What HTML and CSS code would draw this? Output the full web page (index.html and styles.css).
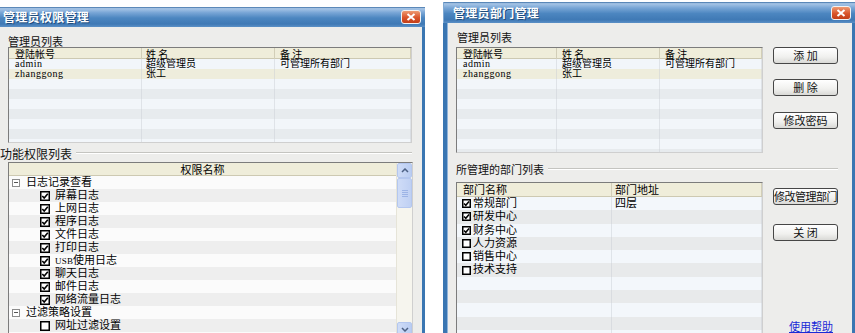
FILE: index.html
```html
<!DOCTYPE html>
<html lang="zh">
<head>
<meta charset="utf-8">
<title>管理员管理</title>
<link rel="stylesheet" href="styles.css">
</head>
<body>
<div class="win win-l">
  <div class="titlebar">
    <span class="title">管理员权限管理</span>
    <span class="close"><svg width="10" height="8" viewBox="0 0 10 8"><path d="M1.5 1 L8.5 7 M8.5 1 L1.5 7" stroke="#fff" stroke-width="2" fill="none"/></svg></span>
  </div>
  <div class="frame">
    <div class="pane pane-l">
      <div class="lbl">管理员列表</div>
      <div class="listbox lb-l">
        <div class="lh cols-l"><span class="c1">登陆帐号</span><span class="c2">姓 名</span><span class="c3">备 注</span></div>
        <div class="lr cols-l r-a"><span class="c1">admin</span><span class="c2">超级管理员</span><span class="c3">可管理所有部门</span></div>
        <div class="lr cols-l r-sel"><span class="c1">zhanggong</span><span class="c2">张工</span><span class="c3"></span></div>
        <div class="lr cols-l r-a"><span class="c1"></span><span class="c2"></span><span class="c3"></span></div>
        <div class="lr cols-l r-b"><span class="c1"></span><span class="c2"></span><span class="c3"></span></div>
        <div class="lr cols-l r-a"><span class="c1"></span><span class="c2"></span><span class="c3"></span></div>
        <div class="lr cols-l r-b"><span class="c1"></span><span class="c2"></span><span class="c3"></span></div>
        <div class="lr cols-l r-a"><span class="c1"></span><span class="c2"></span><span class="c3"></span></div>
        <div class="lr cols-l r-b"><span class="c1"></span><span class="c2"></span><span class="c3"></span></div>
        <div class="lr cols-l r-a"><span class="c1"></span><span class="c2"></span><span class="c3"></span></div>
      </div>
      <div class="sect sect-l"><span>功能权限列表</span><i class="etch"></i></div>
      <div class="tree">
        <div class="tree-main">
          <div class="th">权限名称</div>
          <div class="tr t-a grp"><span class="mbox"></span><span>日志记录查看</span></div>
          <div class="tr t-b leaf"><svg class="ck" width="10" height="10" viewBox="0 0 10 10"><rect x="0.75" y="0.75" width="8.5" height="8.5" fill="#fff" stroke="#000" stroke-width="1.5"/><path d="M2.3 5 L4.2 7 L7.8 2.8" stroke="#000" stroke-width="1.6" fill="none"/></svg><span>屏幕日志</span></div>
          <div class="tr t-a leaf"><svg class="ck" width="10" height="10" viewBox="0 0 10 10"><rect x="0.75" y="0.75" width="8.5" height="8.5" fill="#fff" stroke="#000" stroke-width="1.5"/><path d="M2.3 5 L4.2 7 L7.8 2.8" stroke="#000" stroke-width="1.6" fill="none"/></svg><span>上网日志</span></div>
          <div class="tr t-b leaf"><svg class="ck" width="10" height="10" viewBox="0 0 10 10"><rect x="0.75" y="0.75" width="8.5" height="8.5" fill="#fff" stroke="#000" stroke-width="1.5"/><path d="M2.3 5 L4.2 7 L7.8 2.8" stroke="#000" stroke-width="1.6" fill="none"/></svg><span>程序日志</span></div>
          <div class="tr t-a leaf"><svg class="ck" width="10" height="10" viewBox="0 0 10 10"><rect x="0.75" y="0.75" width="8.5" height="8.5" fill="#fff" stroke="#000" stroke-width="1.5"/><path d="M2.3 5 L4.2 7 L7.8 2.8" stroke="#000" stroke-width="1.6" fill="none"/></svg><span>文件日志</span></div>
          <div class="tr t-b leaf"><svg class="ck" width="10" height="10" viewBox="0 0 10 10"><rect x="0.75" y="0.75" width="8.5" height="8.5" fill="#fff" stroke="#000" stroke-width="1.5"/><path d="M2.3 5 L4.2 7 L7.8 2.8" stroke="#000" stroke-width="1.6" fill="none"/></svg><span>打印日志</span></div>
          <div class="tr t-a leaf"><svg class="ck" width="10" height="10" viewBox="0 0 10 10"><rect x="0.75" y="0.75" width="8.5" height="8.5" fill="#fff" stroke="#000" stroke-width="1.5"/><path d="M2.3 5 L4.2 7 L7.8 2.8" stroke="#000" stroke-width="1.6" fill="none"/></svg><span><span class="lat">USB</span>使用日志</span></div>
          <div class="tr t-b leaf"><svg class="ck" width="10" height="10" viewBox="0 0 10 10"><rect x="0.75" y="0.75" width="8.5" height="8.5" fill="#fff" stroke="#000" stroke-width="1.5"/><path d="M2.3 5 L4.2 7 L7.8 2.8" stroke="#000" stroke-width="1.6" fill="none"/></svg><span>聊天日志</span></div>
          <div class="tr t-a leaf"><svg class="ck" width="10" height="10" viewBox="0 0 10 10"><rect x="0.75" y="0.75" width="8.5" height="8.5" fill="#fff" stroke="#000" stroke-width="1.5"/><path d="M2.3 5 L4.2 7 L7.8 2.8" stroke="#000" stroke-width="1.6" fill="none"/></svg><span>邮件日志</span></div>
          <div class="tr t-b leaf"><svg class="ck" width="10" height="10" viewBox="0 0 10 10"><rect x="0.75" y="0.75" width="8.5" height="8.5" fill="#fff" stroke="#000" stroke-width="1.5"/><path d="M2.3 5 L4.2 7 L7.8 2.8" stroke="#000" stroke-width="1.6" fill="none"/></svg><span>网络流量日志</span></div>
          <div class="tr t-a grp"><span class="mbox"></span><span>过滤策略设置</span></div>
          <div class="tr t-b leaf"><svg class="ck" width="10" height="10" viewBox="0 0 10 10"><rect x="0.75" y="0.75" width="8.5" height="8.5" fill="#fff" stroke="#000" stroke-width="1.5"/></svg><span>网址过滤设置</span></div>
          <div class="tr t-a leaf"></div>
        </div>
        <div class="sb">
          <div class="sb-btn"><svg width="8" height="5" viewBox="0 0 8 5"><path d="M1 4 L4 1 L7 4" stroke="#4D6185" stroke-width="1.5" fill="none"/></svg></div>
          <div class="sb-thumb"><i></i><i></i><i></i><i></i></div>
          <div class="sb-track"></div>
          <div class="sb-btn"><svg width="8" height="5" viewBox="0 0 8 5"><path d="M1 1 L4 4 L7 1" stroke="#4D6185" stroke-width="1.5" fill="none"/></svg></div>
        </div>
      </div>
    </div>
  </div>
</div>

<div class="win win-r">
  <div class="titlebar">
    <span class="title">管理员部门管理</span>
    <span class="close"><svg width="10" height="8" viewBox="0 0 10 8"><path d="M1.5 1 L8.5 7 M8.5 1 L1.5 7" stroke="#fff" stroke-width="2" fill="none"/></svg></span>
  </div>
  <div class="frame">
    <div class="pane pane-r">
      <div class="lbl">管理员列表</div>
      <div class="row row1">
        <div class="listbox lb-r">
          <div class="lh cols-r"><span class="c1">登陆帐号</span><span class="c2">姓 名</span><span class="c3">备 注</span></div>
          <div class="lr cols-r r-a"><span class="c1">admin</span><span class="c2">超级管理员</span><span class="c3">可管理所有部门</span></div>
          <div class="lr cols-r r-sel"><span class="c1">zhanggong</span><span class="c2">张工</span><span class="c3"></span></div>
          <div class="lr cols-r r-a"><span class="c1"></span><span class="c2"></span><span class="c3"></span></div>
          <div class="lr cols-r r-b"><span class="c1"></span><span class="c2"></span><span class="c3"></span></div>
          <div class="lr cols-r r-a"><span class="c1"></span><span class="c2"></span><span class="c3"></span></div>
          <div class="lr cols-r r-b"><span class="c1"></span><span class="c2"></span><span class="c3"></span></div>
          <div class="lr cols-r r-a"><span class="c1"></span><span class="c2"></span><span class="c3"></span></div>
          <div class="lr cols-r r-b"><span class="c1"></span><span class="c2"></span><span class="c3"></span></div>
          <div class="lr cols-r r-a"><span class="c1"></span><span class="c2"></span><span class="c3"></span></div>
          <div class="lr cols-r r-b"><span class="c1"></span><span class="c2"></span><span class="c3"></span></div>
        </div>
        <div class="btns btns-1">
          <button class="btn">添 加</button>
          <button class="btn b2">删 除</button>
          <button class="btn b3">修改密码</button>
        </div>
      </div>
      <div class="sect sect-r"><span>所管理的部门列表</span><i class="etch"></i></div>
      <div class="row row2">
        <div class="listbox dept">
          <div class="dh cols-d"><span class="c1">部门名称</span><span class="c2">部门地址</span></div>
          <div class="dr cols-d d-a"><span class="c1"><svg class="ck" width="9" height="9" viewBox="0 0 9 9"><rect x="0.75" y="0.75" width="7.5" height="7.5" fill="#fff" stroke="#000" stroke-width="1.5"/><path d="M2 4.5 L3.8 6.3 L7 2.4" stroke="#000" stroke-width="1.5" fill="none"/></svg>常规部门</span><span class="c2">四层</span></div>
          <div class="dr cols-d d-b"><span class="c1"><svg class="ck" width="9" height="9" viewBox="0 0 9 9"><rect x="0.75" y="0.75" width="7.5" height="7.5" fill="#fff" stroke="#000" stroke-width="1.5"/><path d="M2 4.5 L3.8 6.3 L7 2.4" stroke="#000" stroke-width="1.5" fill="none"/></svg>研发中心</span><span class="c2"></span></div>
          <div class="dr cols-d d-a"><span class="c1"><svg class="ck" width="9" height="9" viewBox="0 0 9 9"><rect x="0.75" y="0.75" width="7.5" height="7.5" fill="#fff" stroke="#000" stroke-width="1.5"/><path d="M2 4.5 L3.8 6.3 L7 2.4" stroke="#000" stroke-width="1.5" fill="none"/></svg>财务中心</span><span class="c2"></span></div>
          <div class="dr cols-d d-b"><span class="c1"><svg class="ck" width="9" height="9" viewBox="0 0 9 9"><rect x="0.75" y="0.75" width="7.5" height="7.5" fill="#fff" stroke="#000" stroke-width="1.5"/></svg>人力资源</span><span class="c2"></span></div>
          <div class="dr cols-d d-a"><span class="c1"><svg class="ck" width="9" height="9" viewBox="0 0 9 9"><rect x="0.75" y="0.75" width="7.5" height="7.5" fill="#fff" stroke="#000" stroke-width="1.5"/></svg>销售中心</span><span class="c2"></span></div>
          <div class="dr cols-d d-b"><span class="c1"><svg class="ck" width="9" height="9" viewBox="0 0 9 9"><rect x="0.75" y="0.75" width="7.5" height="7.5" fill="#fff" stroke="#000" stroke-width="1.5"/></svg>技术支持</span><span class="c2"></span></div>
          <div class="dr cols-d d-a"><span class="c1"></span><span class="c2"></span></div>
          <div class="dr cols-d d-b"><span class="c1"></span><span class="c2"></span></div>
          <div class="dr cols-d d-a"><span class="c1"></span><span class="c2"></span></div>
          <div class="dr cols-d d-b"><span class="c1"></span><span class="c2"></span></div>
          <div class="dr cols-d d-a"><span class="c1"></span><span class="c2"></span></div>
        </div>
        <div class="btns btns-2">
          <button class="btn b4">修改管理部门</button>
          <button class="btn b5">关 闭</button>
          <a class="help" href="#">使用帮助</a>
        </div>
      </div>
    </div>
  </div>
</div>
</body>
</html>
```

FILE: styles.css
```css
* { box-sizing: border-box; margin: 0; padding: 0; }
html, body { width: 855px; height: 333px; overflow: hidden; background: #ffffff; }
body {
  display: flex;
  align-items: flex-start;
  font-family: "Liberation Serif", "Noto Sans CJK SC", serif;
  font-size: 11px;
  color: #000;
}

.win { display: flex; flex-direction: column; overflow: hidden; flex: none; }
.win-l { width: 425px; height: 326px; margin-top: 7px; }
.win-r { width: 412px; height: 331px; margin-top: 2px; margin-left: 18px; }

.titlebar {
  flex: none;
  display: flex;
  align-items: center;
  justify-content: space-between;
  background: linear-gradient(to bottom, #3a6ea5 0, #a7c5e6 8%, #79a6d6 28%, #4c86c0 55%, #3f79b5 85%, #5b90c6 100%);
  color: #fff;
}
.win-l .titlebar { height: 20px; padding: 0 4px 0 3px; }
.win-r .titlebar { height: 21px; padding: 0 4px 0 9px; border-left: 1px solid #7fa8d2; }
.title {
  font-family: "Noto Sans CJK SC", sans-serif;
  font-weight: 700;
  font-size: 12px;
  line-height: 14px;
  letter-spacing: 0.3px;
  text-shadow: 1px 1px 0 #1f4c7d;
}
.close {
  width: 20px;
  height: 14px;
  border-radius: 3px;
  border: 1px solid #f2f2f2;
  background: linear-gradient(to bottom, #ee9a72, #d9542a 55%, #c33e18);
  display: flex;
  align-items: center;
  justify-content: center;
}

.frame {
  flex: 1;
  min-height: 0;
  background: #ededeb;
  border-right: 3px solid #3a76b2;
  overflow: hidden;
}
.win-r .frame { border-left: 4px solid #3a76b2; box-shadow: inset 1px 0 0 #8fb3da; }

.pane { display: flex; flex-direction: column; height: 100%; }
.pane-l { padding: 8px 10px 0 8px; }
.pane-r { padding: 8px 14px 0 9px; }

.lbl {
  height: 12px;
  line-height: 12px;
  font-family: "Noto Sans CJK SC", sans-serif;
  font-size: 11px;
  color: #111;
  flex: none;
}
.pane-r .lbl { margin-bottom: 4px; padding-left: 1px; }

.sect {
  display: flex;
  align-items: center;
  gap: 4px;
  height: 12px;
  font-family: "Noto Sans CJK SC", sans-serif;
  color: #111;
  flex: none;
}
.sect-l { margin: 4px 0 3px -8px; font-size: 12px; }
.sect-r { margin: 10px 0 7px 0; font-size: 11px; }
.etch { flex: 1; height: 2px; border-top: 1px solid #c4c4c0; border-bottom: 1px solid #ffffff; }

.listbox {
  background: #ffffff;
  border: 1px solid;
  border-color: #7c7c7c #cfcfcf #cfcfcf #7c7c7c;
  overflow: hidden;
  flex: none;
}
.lb-l { width: 404px; height: 96px; }
.lb-r { width: 307px; height: 106px; }

.lh, .lr { display: grid; }
.cols-l { grid-template-columns: 133px 133px 1fr; }
.cols-r { grid-template-columns: 100px 103px 1fr; }
.lh {
  height: 11px;
  line-height: 11px;
  font-size: 10px;
  background: #efedda;
  border-bottom: 1px solid #cdc9b2;
  font-family: "Noto Sans CJK SC", sans-serif;
}
.lh span { border-right: 1px solid #d2ceb8; white-space: nowrap; }
.lr { height: 10px; line-height: 10px; font-size: 10px; }
.lr span { border-right: 1px solid rgba(200, 205, 210, 0.45); white-space: nowrap; }
.lr .c1 { letter-spacing: 0.5px; }
.cols-l .c1 { padding-left: 6px; }
.cols-l .c2 { padding-left: 4px; }
.cols-l .c3 { padding-left: 5px; }
.cols-r .c1 { padding-left: 6px; }
.cols-r .c2 { padding-left: 5px; }
.cols-r .c3 { padding-left: 5px; }
.r-a { background: #f2f6fa; }
.r-b { background: #e7ebee; }
.r-sel { background: #eeeddc; }

.tree {
  display: flex;
  width: 405px;
  height: 176px;
  background: #fff;
  border: 1px solid;
  border-color: #7c7c7c #cfcfcf #cfcfcf #7c7c7c;
  overflow: hidden;
  flex: none;
}
.tree-main { flex: 1; overflow: hidden; }
.th {
  height: 13px;
  line-height: 13px;
  text-align: center;
  background: #efedda;
  box-shadow: inset 0 -1px 0 #cdc9b2;
  font-family: "Noto Sans CJK SC", sans-serif;
  font-size: 11px;
}
.tr {
  height: 13px;
  line-height: 13px;
  display: flex;
  align-items: center;
  white-space: nowrap;
}
.t-a { background: #fbfbfb; }
.t-b { background: #eeeeee; }
.grp { padding-left: 3px; gap: 6px; }
.leaf { padding-left: 31px; gap: 5px; }
.ck { flex: none; display: block; }
.mbox {
  width: 8px;
  height: 8px;
  border: 1px solid #8c8c8c;
  background: #fff linear-gradient(#555, #555) center / 4px 1px no-repeat;
  flex: none;
}
.lat { font-size: 9px; letter-spacing: 0.2px; }

.sb {
  width: 16px;
  flex: none;
  display: flex;
  flex-direction: column;
  background: #f6f5ee;
  border-left: 1px solid #e6e4d8;
}
.sb-btn {
  height: 15px;
  border: 1px solid #b4c7ef;
  border-radius: 2px;
  background: linear-gradient(to right, #cfdcf7, #bacdf2);
  display: flex;
  align-items: center;
  justify-content: center;
  flex: none;
}
.sb-thumb {
  height: 30px;
  border: 1px solid #b4c7ef;
  border-radius: 2px;
  background: linear-gradient(to right, #cfdcf7, #bfd0f3);
  display: flex;
  flex-direction: column;
  align-items: center;
  justify-content: center;
  gap: 1px;
  flex: none;
}
.sb-thumb i { display: block; width: 6px; height: 1px; background: #9db4e6; }
.sb-track { flex: 1; }

.row { display: flex; gap: 10px; flex: none; }
.row1 { height: 106px; }
.row2 { height: 151px; align-items: flex-start; }

.btns { width: 65px; display: flex; flex-direction: column; flex: none; }
.btns-2 { height: 151px; }
.btn {
  width: 65px;
  height: 17px;
  border: 1px solid #464646;
  border-radius: 3px;
  background: linear-gradient(to bottom, #ffffff, #f0f0ee 60%, #d9d9d6);
  font-family: "Noto Sans CJK SC", sans-serif;
  font-size: 11px;
  line-height: 15px;
  color: #111;
  white-space: nowrap;
  text-align: center;
  padding: 0;
  flex: none;
}
.b2 { margin-top: 15px; }
.b3 { margin-top: 16px; }
.b4 { margin-top: 6px; letter-spacing: -0.5px; overflow: visible; }
.b5 { margin-top: 19px; }
.help {
  margin-top: auto;
  margin-bottom: 1px;
  padding-left: 16px;
  height: 11px;
  line-height: 11px;
  font-family: "Noto Sans CJK SC", sans-serif;
  font-size: 11px;
  color: #1a2ad6;
  text-decoration: underline;
  white-space: nowrap;
  flex: none;
}

.dept { width: 307px; height: 160px; }
.cols-d { display: grid; grid-template-columns: 155px 1fr; }
.dh {
  height: 14px;
  line-height: 13px;
  background: #efedda;
  border-bottom: 1px solid #cdc9b2;
  font-family: "Noto Sans CJK SC", sans-serif;
}
.dh span { border-right: 1px solid #d2ceb8; white-space: nowrap; }
.dh .c1 { padding-left: 6px; }
.dh .c2 { padding-left: 3px; }
.dr { height: 13.3px; line-height: 13.3px; }
.dr span { border-right: 1px solid rgba(200, 205, 210, 0.45); white-space: nowrap; }
.dr .c1 { padding-left: 5px; display: flex; align-items: center; gap: 2px; }
.dr .c2 { padding-left: 3px; }
.d-a { background: #f3f7fb; }
.d-b { background: #e8eaeb; }
```
